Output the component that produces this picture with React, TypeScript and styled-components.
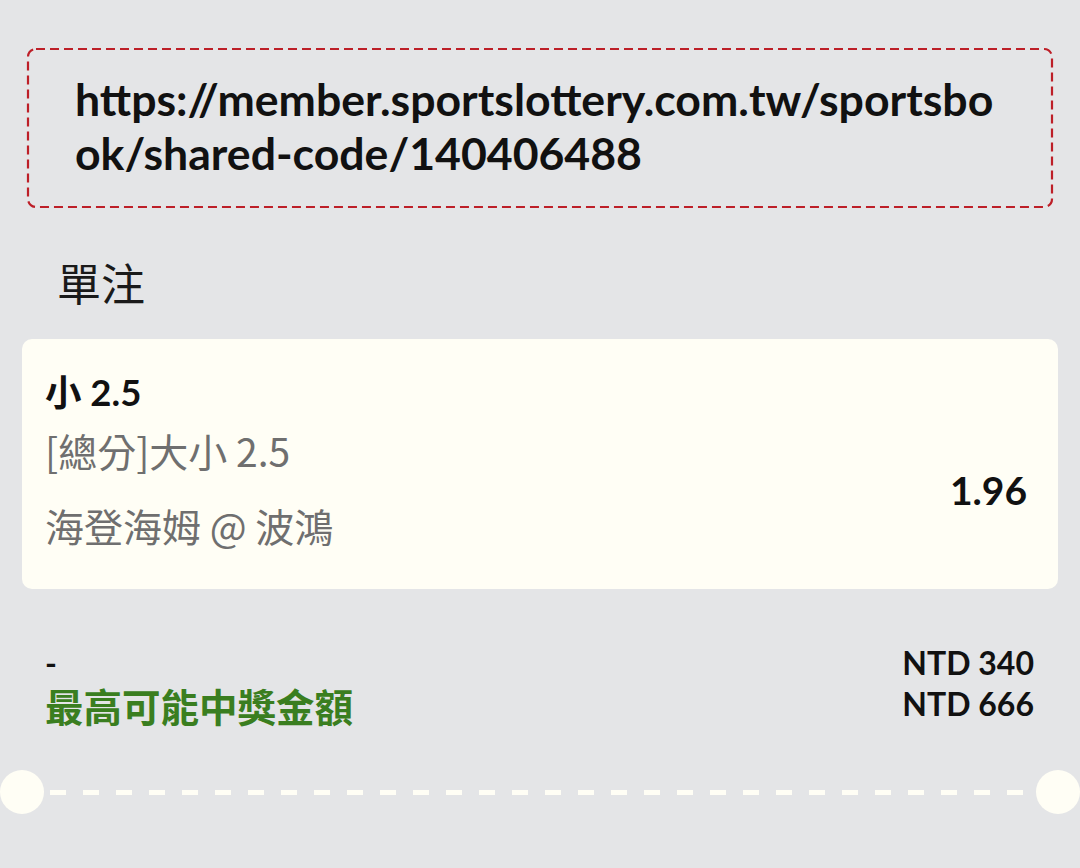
import React from 'react';
import styled, { createGlobalStyle } from 'styled-components';

const GlobalStyle = createGlobalStyle`
   html, body {
      margin: 0;
      padding: 0;
      background: #e4e5e7;
   }
   body {
      font-family: 'Lato', 'Noto Sans CJK TC', sans-serif;
      color: #111;
   }
`;

const colors = {
   page: '#e4e5e7',
   card: '#fffef5',
   red: '#bd1f28',
   green: '#3a7e20',
   muted: '#6f6f6f',
};

type AmountRowProps = {
   label: string;
   value: string;
   $green?: boolean;
};

const AmountRow = (props: AmountRowProps) => (
   <Row>
      <RowLabel $green={props.$green}>{props.label}</RowLabel>
      <RowValue>{props.value}</RowValue>
   </Row>
);

export default function App() {
   return (
      <Page>
         <GlobalStyle />
         <LinkBox>
            <DashFrame aria-hidden>
               <DashRect x="1" y="1" rx="8" ry="8" />
            </DashFrame>
            <LinkText>https://member.sportslottery.com.tw/sportsbook/shared-code/140406488</LinkText>
         </LinkBox>

         <SectionTitle>單注</SectionTitle>

         <BetCard>
            <BetInfo>
               <BetTitle>小 2.5</BetTitle>
               <BetMarket>[總分]大小 2.5</BetMarket>
               <BetMatch>海登海姆 @ 波鴻</BetMatch>
            </BetInfo>
            <Odds>1.96</Odds>
         </BetCard>

         <Summary>
            <AmountRow label="-" value="NTD 340" />
            <AmountRow label="最高可能中獎金額" value="NTD 666" $green />
         </Summary>

         <Divider>
            <Notch />
            <DashLine />
            <Notch />
         </Divider>
      </Page>
   );
}

const Page = styled.div`
   min-height: 868px;
   background: ${colors.page};
   padding-top: 48px;
   box-sizing: border-box;
   overflow: hidden;
`;

const LinkBox = styled.div`
   position: relative;
   margin: 0 27px;
   height: 160px;
   box-sizing: border-box;
   padding: 24px 44px 0 48px;
`;

const DashFrame = styled.svg`
   position: absolute;
   left: 0;
   top: 0;
   width: 100%;
   height: 100%;
   overflow: visible;
`;

const DashRect = styled.rect`
   width: calc(100% - 2px);
   height: calc(100% - 2px);
   fill: none;
   stroke: ${colors.red};
   stroke-width: 2.2;
   stroke-dasharray: 9 5;
`;

const LinkText = styled.div`
   position: relative;
   font-family: 'Lato', sans-serif;
   font-weight: 700;
   font-size: 44.6px;
   line-height: 54px;
   word-break: break-all;
   color: #111;
`;

const SectionTitle = styled.h2`
   margin: 44px 0 0 57px;
   font-family: 'Noto Sans CJK TC', sans-serif;
   font-weight: 400;
   font-size: 44px;
   line-height: 60px;
   color: #1a1a1a;
`;

const BetCard = styled.div`
   margin: 27px 22px 0;
   height: 250px;
   box-sizing: border-box;
   background: ${colors.card};
   border-radius: 10px;
   padding: 31px 31px 0 23px;
   display: flex;
   align-items: flex-start;
   justify-content: space-between;
`;

const BetInfo = styled.div`
   display: flex;
   flex-direction: column;
`;

const BetTitle = styled.div`
   font-family: 'Lato', 'Noto Sans CJK TC', sans-serif;
   font-weight: 700;
   font-size: 36.5px;
   line-height: 44px;
   color: #111;
`;

const BetMarket = styled.div`
   margin-top: 11px;
   font-family: 'Noto Sans CJK TC', sans-serif;
   font-size: 39px;
   line-height: 50px;
   color: ${colors.muted};
`;

const BetMatch = styled(BetMarket)`
   margin-top: 25px;
`;

const Odds = styled.div`
   margin-top: 97px;
   font-family: 'Lato', sans-serif;
   font-weight: 700;
   font-size: 39px;
   line-height: 47px;
   color: #111;
`;

const Summary = styled.div`
   margin: 53px 46px 0 45px;
   display: flex;
   flex-direction: column;
`;

const Row = styled.div`
   display: flex;
   justify-content: space-between;
   align-items: flex-start;
   height: 41px;
`;

const RowLabel = styled.span<{ $green?: boolean }>`
   margin-top: ${(p) => (p.$green ? '4px' : '0')};
   font-family: 'Lato', 'Noto Sans CJK TC', sans-serif;
   font-weight: 700;
   font-size: ${(p) => (p.$green ? '38.5px' : '32px')};
   line-height: 41px;
   white-space: nowrap;
   color: ${(p) => (p.$green ? colors.green : '#111')};
`;

const RowValue = styled.span`
   font-family: 'Lato', sans-serif;
   font-weight: 700;
   font-size: 32px;
   line-height: 41px;
   color: #111;
`;

const Divider = styled.div`
   margin-top: 46px;
   display: flex;
   align-items: center;
   gap: 6px;
`;

const Notch = styled.div`
   width: 44px;
   height: 44px;
   border-radius: 50%;
   background: ${colors.card};
   flex-shrink: 0;
`;

const DashLine = styled.div`
   flex: 1;
   height: 5px;
   background: repeating-linear-gradient(
      to right,
      ${colors.card} 0 16px,
      transparent 16px 33px
   );
`;
